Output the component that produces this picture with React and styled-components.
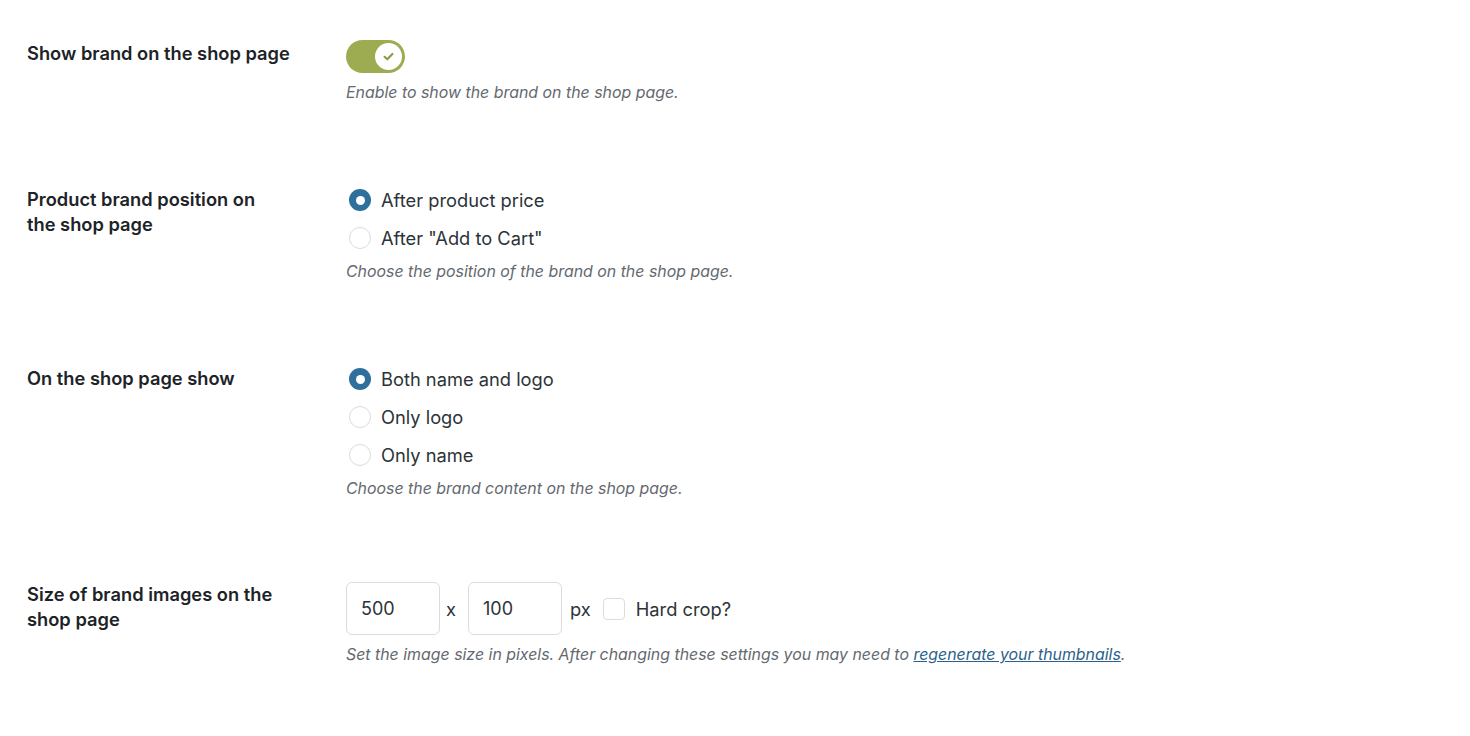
import React, { useState } from 'react';
import styled, { createGlobalStyle } from 'styled-components';

const GlobalStyle = createGlobalStyle`
  body {
    margin: 0;
    background: #ffffff;
    font-family: Inter, 'Noto Sans', sans-serif;
    color: #1d2327;
  }
`;

const Page = styled.div`
  padding: 40px 0 0 27px;
  width: 1443px;
`;

const Row = styled.div`
  display: grid;
  grid-template-columns: 319px 1fr;
  align-items: start;
  margin-bottom: ${(p) => p.gap || 77}px;
`;

const Label = styled.div`
  font-size: 18.3px;
  font-weight: 600;
  line-height: 24.5px;
  color: #1d2327;
  width: ${(p) => p.w || 277}px;
  padding-top: ${(p) => p.offset || 0}px;
`;

const Field = styled.div`
  display: flex;
  flex-direction: column;
  align-items: flex-start;
`;

const Description = styled.p`
  margin: ${(p) => p.top || 0}px 0 0;
  font-size: 15.9px;
  line-height: 22px;
  font-style: italic;
  color: #646970;
  a {
    color: #2c5f8a;
    text-decoration: underline;
  }
`;

const Toggle = styled.button`
  width: 59px;
  height: 33px;
  border-radius: 17px;
  border: none;
  padding: 3px;
  background: ${(p) => (p.on ? '#9dac50' : '#c3c4c7')};
  display: flex;
  justify-content: ${(p) => (p.on ? 'flex-end' : 'flex-start')};
  align-items: center;
  cursor: pointer;
`;

const Knob = styled.span`
  width: 27px;
  height: 27px;
  border-radius: 50%;
  background: #ffffff;
  display: flex;
  align-items: center;
  justify-content: center;
`;

const RadioRow = styled.label`
  display: flex;
  align-items: center;
  height: 38px;
  gap: 10px;
  padding-left: 3px;
  font-size: 18.3px;
  color: #2c3338;
  cursor: pointer;
`;

const RadioDot = styled.span`
  width: 22px;
  height: 22px;
  box-sizing: border-box;
  border-radius: 50%;
  border: ${(p) => (p.checked ? 'none' : '1px solid #dcdcde')};
  background: ${(p) => (p.checked ? '#2f6f9b' : '#ffffff')};
  display: flex;
  align-items: center;
  justify-content: center;
  &::after {
    content: '';
    display: ${(p) => (p.checked ? 'block' : 'none')};
    width: 9px;
    height: 9px;
    border-radius: 50%;
    background: #ffffff;
  }
`;

const SizeRow = styled.div`
  display: flex;
  align-items: center;
  font-size: 18.3px;
  color: #2c3338;
`;

const NumberInput = styled.input`
  width: 94px;
  height: 53px;
  box-sizing: border-box;
  border: 1px solid #dcdcde;
  border-radius: 6px;
  padding: 0 14px;
  font-family: inherit;
  font-size: 18px;
  color: #2c3338;
  background: #ffffff;
  outline: none;
`;

const Sep = styled.span`
  margin: 0 ${(p) => p.right}px 0 ${(p) => p.left}px;
`;

const Checkbox = styled.span`
  width: 22px;
  height: 22px;
  box-sizing: border-box;
  border: 1px solid #dcdcde;
  border-radius: 4px;
  background: #ffffff;
  margin-right: 11px;
`;

const Check = () => (
  <svg width="15" height="15" viewBox="0 0 15 15">
    <path d="M3.6 7.8l2.7 2.5 5.1-5.3" fill="none" stroke="#8e9c45" strokeWidth="2.2" strokeLinecap="round" strokeLinejoin="round" />
  </svg>
);

function RadioGroup({ options, value, onChange }) {
  return options.map((opt) => (
    <RadioRow key={opt} onClick={() => onChange(opt)}>
      <RadioDot checked={value === opt} />
      {opt}
    </RadioRow>
  ));
}

export default function App() {
  const [show, setShow] = useState(true);
  const [position, setPosition] = useState('After product price');
  const [content, setContent] = useState('Both name and logo');

  return (
    <Page>
      <GlobalStyle />
      <Row>
        <Label offset={1}>Show brand on the shop page</Label>
        <Field>
          <Toggle on={show} onClick={() => setShow(!show)}>
            <Knob>{show && <Check />}</Knob>
          </Toggle>
          <Description top={9}>Enable to show the brand on the shop page.</Description>
        </Field>
      </Row>

      <Row>
        <Label offset={6} w={250}>Product brand position on the shop page</Label>
        <Field>
          <RadioGroup
            options={['After product price', 'After "Add to Cart"']}
            value={position}
            onChange={setPosition}
          />
          <Description top={4}>Choose the position of the brand on the shop page.</Description>
        </Field>
      </Row>

      <Row gap={82}>
        <Label offset={6}>On the shop page show</Label>
        <Field>
          <RadioGroup
            options={['Both name and logo', 'Only logo', 'Only name']}
            value={content}
            onChange={setContent}
          />
          <Description top={4}>Choose the brand content on the shop page.</Description>
        </Field>
      </Row>

      <Row>
        <Label offset={0}>Size of brand images on the shop page</Label>
        <Field>
          <SizeRow>
            <NumberInput defaultValue="500" />
            <Sep left={6} right={12}>x</Sep>
            <NumberInput defaultValue="100" />
            <Sep left={8} right={12}>px</Sep>
            <Checkbox />
            Hard crop?
          </SizeRow>
          <Description top={9}>
            Set the image size in pixels. After changing these settings you may need to{' '}
            <a href="#">regenerate your thumbnails</a>.
          </Description>
        </Field>
      </Row>
    </Page>
  );
}
